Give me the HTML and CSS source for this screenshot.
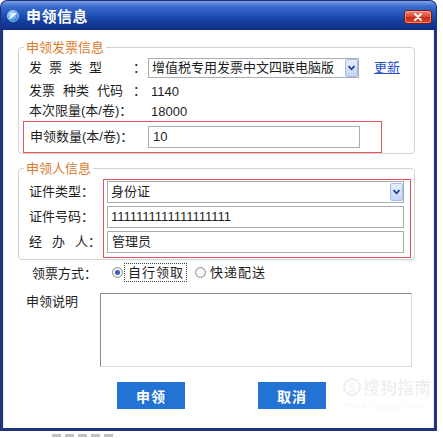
FILE: index.html
```html
<!DOCTYPE html>
<html>
<head>
<meta charset="utf-8">
<link rel="stylesheet" href="styles.css">
</head>
<body>
<div class="dialog">
  <div class="titlebar">
    <svg class="ticon" viewBox="0 0 12 12" width="12" height="12">
      <defs>
        <radialGradient id="g1" cx="40%" cy="35%" r="70%">
          <stop offset="0" stop-color="#e8f4ff"/>
          <stop offset="0.6" stop-color="#5aa6f0"/>
          <stop offset="1" stop-color="#1c5fc4"/>
        </radialGradient>
      </defs>
      <circle cx="6" cy="6" r="5.6" fill="url(#g1)" stroke="#dfeaff" stroke-width="0.6"/>
      <path d="M3 8.2 C4.5 6.8 6 5 8.6 3.4" stroke="#fff" stroke-width="1.4" fill="none" stroke-linecap="round"/>
    </svg>
    <span class="title">申领信息</span>
    <span class="close">
      <svg viewBox="0 0 10 8" width="10" height="8"><path d="M2 1 L8 7 M8 1 L2 7" stroke="#fff" stroke-width="1.8" stroke-linecap="round"/></svg>
    </span>
  </div>
  <div class="body">
    <fieldset class="fs fs1">
      <legend>申领发票信息</legend>
      <div class="row r1">
        <span class="lbl lbl-type"><span class="sp">发票类</span><span>型</span><span class="colon">：</span></span>
        <div class="select sel1">
          <span class="sv">增值税专用发票中文四联电脑版</span>
          <span class="arr"><svg viewBox="0 0 9 6" width="9" height="6"><path d="M1.5 1.2 L4.5 4.3 L7.5 1.2" stroke="#1d3f8f" stroke-width="1.7" fill="none"/></svg></span>
        </div>
        <a class="link">更新</a>
      </div>
      <div class="row r2">
        <span class="lbl lbl-code"><span class="pair">发票</span><span class="pair">种类</span><span>代码</span><span class="colon">：</span></span>
        <span class="val">1140</span>
      </div>
      <div class="row r3">
        <span class="lbl">本次限量(本/卷)：</span>
        <span class="val">18000</span>
      </div>
      <div class="redbox rb1">
        <span class="lbl lbl-num">申领数量(本/卷)：</span>
        <div class="input in1">10</div>
      </div>
    </fieldset>

    <fieldset class="fs fs2">
      <legend>申领人信息</legend>
      <div class="pwrap">
        <div class="plabels">
          <span>证件类型：</span>
          <span>证件号码：</span>
          <span><span class="sp2">经办</span>人：</span>
        </div>
        <div class="redbox rb2">
          <div class="select sel2">
            <span class="sv">身份证</span>
            <span class="arr"><svg viewBox="0 0 9 6" width="9" height="6"><path d="M1.5 1.2 L4.5 4.3 L7.5 1.2" stroke="#1d3f8f" stroke-width="1.7" fill="none"/></svg></span>
          </div>
          <div class="input in2 ones">1111111111111111111</div>
          <div class="input in2">管理员</div>
        </div>
      </div>
    </fieldset>

    <div class="method">
      <span class="mlbl">领票方式：</span>
      <span class="radio checked"></span>
      <span class="opt focus">自行领取</span>
      <span class="radio"></span>
      <span class="opt">快递配送</span>
    </div>

    <div class="note">
      <span class="nlbl">申领说明</span>
      <div class="textarea"></div>
    </div>

    <div class="buttons">
      <span class="btn">申领</span>
      <span class="btn">取消</span>
    </div>
  </div>
  <div class="watermark">
    <div class="wm1"><span class="wmS">S</span>搜狗指南</div>
    <div class="wm2">zhinan.sogou.com</div>
  </div>
</div>
<div class="behind"></div>
</body>
</html>
```

FILE: styles.css
```css
* { box-sizing: border-box; }
html, body { margin: 0; padding: 0; background: #fff; }
body {
  width: 443px;
  height: 438px;
  overflow: hidden;
  font-family: "Liberation Sans", "Noto Sans CJK SC", sans-serif;
  font-size: 13px;
  color: #1e1e1e;
}
.dialog { width: 437px; position: relative; }

.titlebar {
  height: 30px;
  border-radius: 7px 7px 0 0;
  background: linear-gradient(#7ea3e6 0, #3d6dcc 18%, #2254b8 45%, #163f9e 70%, #0e2c84 100%);
  border: 1px solid #1c2f78;
  border-bottom: 0;
  display: flex;
  align-items: center;
  padding-left: 6px;
}
.ticon { flex: none; margin-top: 1px; }
.title {
  color: #fff;
  font-weight: bold;
  font-size: 15px;
  line-height: 30px;
  margin-left: 7px;
  font-family: "Noto Sans CJK SC", sans-serif;
  letter-spacing: 0.5px;
}
.close {
  margin-left: auto;
  margin-right: 4px;
  margin-top: 2px;
  width: 28px;
  height: 14px;
  border-radius: 3px;
  border: 1px solid #7a1a12;
  box-shadow: inset 0 0 0 1px rgba(255,200,190,0.5);
  background: linear-gradient(#f08a78 0, #e04a36 45%, #c42a1a 55%, #d84a34 100%);
  display: flex;
  align-items: center;
  justify-content: center;
}

.body {
  height: 401px;
  border: 3px solid #22357c;
  border-top: 0;
  box-shadow: inset 1px 0 0 #e4e8f0, inset -1px 0 0 #e4e8f0;
  padding: 8px 18px 19px 15px;
  background: #fff;
}

.fs {
  margin: 0;
  min-width: 0;
  width: 397px;
  border: 1px solid #d3d3d3;
  border-radius: 4px;
  padding: 2px 3px 0 10px;
}
.fs legend {
  color: #dc7a2c;
  font-family: "Noto Sans CJK SC", sans-serif;
  font-size: 13px;
  line-height: 18px;
  padding: 0 2px;
  margin-left: -5px;
}
.fs2 { margin-top: 5px; padding-bottom: 1px; }

.row { display: flex; align-items: center; height: 20px; }
.r1 { margin-bottom: 3px; }
.lbl {
  flex: none;
  width: 119px;
  display: flex;
  align-items: center;
  line-height: 20px;
  white-space: nowrap;
}
.colon { margin-left: auto; margin-right: 2px; }
.lbl-type .sp { letter-spacing: 7px; }
.lbl-code .pair { margin-right: 8px; }
.val { padding-left: 3px; }

.select {
  display: flex;
  align-items: center;
  height: 20px;
  border: 1px solid #a9aeb6;
  background: #fff;
  padding-left: 3px;
}
.sel1 { width: 211px; }
.sel2 { width: 297px; height: 22px; }
.sv { flex: 1; white-space: nowrap; overflow: hidden; line-height: 18px; }
.arr {
  flex: none;
  width: 13px;
  height: 18px;
  border: 1px solid #a7bde6;
  border-radius: 2px;
  background: linear-gradient(#e6eefc, #c3d5f6);
  display: flex;
  align-items: center;
  justify-content: center;
}
.link {
  margin-left: 15px;
  color: #2451c8;
  text-decoration: underline;
  line-height: 20px;
}

.redbox { border: 1px solid #e8545a; }
.rb1 {
  margin-left: -6px;
  width: 359px;
  height: 32px;
  padding-left: 6px;
  display: flex;
  align-items: center;
}
.lbl-num { width: 118px; }
.input {
  height: 22px;
  border: 1px solid #adadad;
  background: #fff;
  padding-left: 4px;
  line-height: 20px;
  white-space: nowrap;
}
.in1 { width: 212px; }
.in2 { width: 297px; }
.ones { padding-left: 3px; }

.pwrap { display: flex; }
.plabels {
  width: 74px;
  flex: none;
  padding-top: 2px;
  display: flex;
  flex-direction: column;
  gap: 3px;
}
.plabels > span { height: 22px; line-height: 22px; white-space: nowrap; }
.sp2 { letter-spacing: 10px; }
.rb2 {
  width: 308px;
  padding: 1px 6px 4px 3px;
  display: flex;
  flex-direction: column;
  gap: 3px;
}

.method {
  margin-top: 2px;
  height: 20px;
  display: flex;
  align-items: center;
  padding-left: 14px;
}
.mlbl { width: 80px; flex: none; }
.radio {
  flex: none;
  width: 11px;
  height: 11px;
  border-radius: 50%;
  border: 1px solid #8f8f8f;
  background: radial-gradient(#ffffff, #e6e6e6);
  position: relative;
}
.radio.checked::after {
  content: "";
  position: absolute;
  left: 2px; top: 2px;
  width: 5px; height: 5px;
  border-radius: 50%;
  background: #3a5fc0;
}
.opt { letter-spacing: 1px; padding: 0 2px 0 3px; line-height: 17px; }
.opt.focus { margin-left: 1px; margin-right: 8px; border: 1px dotted #444; }
.radio + .opt { margin-left: 1px; }

.note { margin-top: 11px; display: flex; padding-left: 8px; }
.nlbl { width: 74px; flex: none; line-height: 18px; }
.textarea {
  width: 312px;
  height: 74px;
  border: 1px solid #dcdcdc;
  border-top-color: #8a8a8a;
  border-left-color: #8a8a8a;
}

.buttons { margin-top: 15px; display: flex; gap: 73px; padding-left: 99px; }
.btn {
  width: 68px;
  height: 27px;
  background: #2373d4;
  color: #fff;
  font-weight: bold;
  font-size: 14px;
  font-family: "Noto Sans CJK SC", sans-serif;
  display: flex;
  align-items: center;
  justify-content: center;
  letter-spacing: 1px;
}

.watermark {
  position: absolute;
  left: 343px;
  top: 376px;
  color: rgba(0,0,0,0.07);
  pointer-events: none;
}
.wm1 {
  font-size: 17px;
  font-weight: bold;
  font-family: "Noto Sans CJK SC", sans-serif;
  display: flex;
  align-items: center;
  line-height: 22px;
}
.wmS {
  width: 18px; height: 18px;
  border: 2px solid rgba(0,0,0,0.07);
  border-radius: 50%;
  font-size: 12px;
  display: flex; align-items: center; justify-content: center;
  margin-right: 2px;
}
.wm2 { font-size: 9px; letter-spacing: 0.5px; margin-top: 3px; }

.behind {
  margin-left: 52px;
  margin-top: 3px;
  width: 64px;
  height: 3px;
  background: repeating-linear-gradient(90deg, #9a9a9a 0 9px, transparent 9px 13px);
  opacity: 0.6;
}
```
